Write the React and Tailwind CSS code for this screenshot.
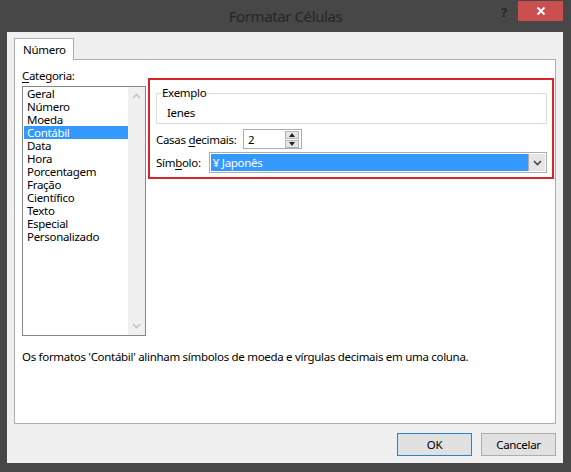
import React from 'react';

const categories = [
  'Geral',
  'Número',
  'Moeda',
  'Contábil',
  'Data',
  'Hora',
  'Porcentagem',
  'Fração',
  'Científico',
  'Texto',
  'Especial',
  'Personalizado',
];

function Chevron({ up, className }) {
  return (
    <svg width="9" height="6" viewBox="0 0 9 6" className={className}>
      <path
        d={up ? 'M1 5 L4.5 1.5 L8 5' : 'M1 1 L4.5 4.5 L8 1'}
        fill="none"
        stroke="currentColor"
        strokeWidth="1.6"
      />
    </svg>
  );
}

export default function App() {
  return (
    <div className="w-[571px] h-[472px] bg-[#474747] flex flex-col font-['Noto_Sans',sans-serif] text-[11.5px] leading-[13px] tracking-[-0.3px] text-black">
      {/* Title bar */}
      <div className="h-[32px] grid grid-cols-[1fr_auto_1fr] items-start">
        <div />
        <div className="pt-[6px] text-[15px] leading-[20px] text-[#262626] tracking-[-0.4px]">
          Formatar Células
        </div>
        <div className="flex justify-end items-start pr-[8px] pt-[1px]">
          <span className="mt-[3px] mr-[11px] text-[13px] leading-[16px] font-bold text-[#262626]">?</span>
          <div className="w-[45px] h-[20px] bg-[#c9504e] flex items-center justify-center">
            <svg width="10" height="10" viewBox="0 0 10 10">
              <path d="M1.5 1.5 L8.5 8.5 M8.5 1.5 L1.5 8.5" stroke="#fff" strokeWidth="1.8" />
            </svg>
          </div>
        </div>
      </div>

      {/* Client area */}
      <div className="flex-1 ml-[7px] mr-[8px] mb-[9px] bg-[#f0f0f0] flex flex-col px-[7px] pt-[6px]">
        {/* Tab */}
        <div className="flex">
          <div className="w-[60px] h-[22px] -mb-px relative bg-white border border-b-0 border-[#adadad] pl-[8px] pt-[3px] leading-[16px]">
            Número
          </div>
        </div>

        {/* Panel */}
        <div className="h-[365px] bg-white border border-[#adadad] flex flex-col px-[7px]">
          <div className="flex gap-[2px]">
            <div className="flex flex-col pt-[9px]">
              <div className="h-[17px] leading-[14px]">
                <span className="underline underline-offset-2">C</span>ategoria:
              </div>
              <div className="w-[124px] h-[250px] border border-[#828790] flex">
                <div className="flex-1 pl-[1px]">
                  {categories.map((c) => (
                    <div
                      key={c}
                      className={`h-[13px] pl-[3px] leading-[13px] whitespace-nowrap ${
                        c === 'Contábil' ? 'bg-[#3399ff] text-white' : ''
                      }`}
                    >
                      {c}
                    </div>
                  ))}
                </div>
                <div className="w-[17px] bg-[#f0f0f0] flex flex-col items-center justify-between py-[6px] text-[#c2c2c2]">
                  <Chevron up />
                  <Chevron />
                </div>
              </div>
            </div>

            <div className="mt-[18px] w-[406px] h-[101px] border-2 border-[#d9242c] flex flex-col pl-[6px] pr-[5px]">
              <fieldset className="mt-[6px] h-[38px] border border-[#dcdcdc] px-[4px]">
                <legend className="px-px leading-[14px]">Exemplo</legend>
                <div className="pl-[6px] pt-[6px] leading-[14px]">Ienes</div>
              </fieldset>

              <div className="flex items-center mt-[5px] h-[20px]">
                <span className="w-[87px] whitespace-nowrap">
                  Casas <span className="underline underline-offset-2">d</span>ecimais:
                </span>
                <div className="w-[59px] h-[20px] border border-[#abadb3] flex">
                  <span className="flex-1 pl-[4px] pt-[3px]">2</span>
                  <div className="w-[17px] flex flex-col justify-center items-center gap-[1px] pr-px">
                    <div className="w-[14px] h-[8px] bg-[#e6e6e6] border border-[#b5b5b5] flex items-center justify-center">
                      <svg width="6" height="4" viewBox="0 0 6 4"><path d="M0 4 L3 0 L6 4Z" fill="#222" /></svg>
                    </div>
                    <div className="w-[14px] h-[8px] bg-[#e6e6e6] border border-[#b5b5b5] flex items-center justify-center">
                      <svg width="6" height="4" viewBox="0 0 6 4"><path d="M0 0 L3 4 L6 0Z" fill="#222" /></svg>
                    </div>
                  </div>
                </div>
              </div>

              <div className="flex items-center mt-[3px] h-[21px]">
                <span className="w-[53px] whitespace-nowrap">
                  Sím<span className="underline underline-offset-2">b</span>olo:
                </span>
                <div className="w-[339px] h-[21px] border border-[#abadb3] flex p-px">
                  <div className="flex-1 bg-[#3399ff] text-white pl-[2px] pt-[2px] leading-[14px]">¥ Japonês</div>
                  <div className="w-[17px] bg-[#e5e5e5] border-l border-[#acacac] flex items-center justify-center text-[#444]">
                    <Chevron />
                  </div>
                </div>
              </div>
            </div>
          </div>

          <p className="mt-[14px] leading-[14px] whitespace-nowrap">
            Os formatos 'Contábil' alinham símbolos de moeda e vírgulas decimais em uma coluna.
          </p>
        </div>

        {/* Buttons */}
        <div className="flex justify-end gap-[9px] mt-[9px]">
          <button className="w-[75px] h-[23px] bg-[#e1e1e1] border border-[#3c7fb1] shadow-[inset_0_0_0_1px_#cde4f7]">OK</button>
          <button className="w-[75px] h-[23px] bg-[#e1e1e1] border border-[#adadad]">Cancelar</button>
        </div>
      </div>
    </div>
  );
}
